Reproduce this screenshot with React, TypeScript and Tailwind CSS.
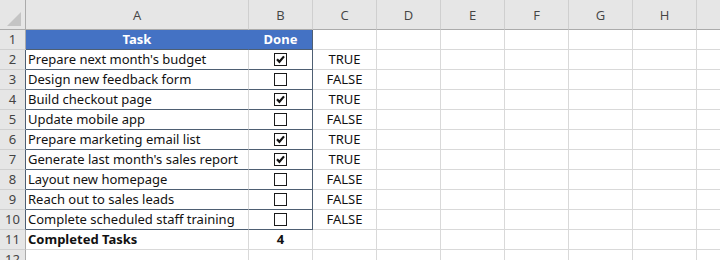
const cols = ['A', 'B', 'C', 'D', 'E', 'F', 'G', 'H', ''];
const widths = ['w-[223px]', 'w-[64px]', 'w-[64px]', 'w-[64px]', 'w-[64px]', 'w-[64px]', 'w-[64px]', 'w-[64px]', 'w-[64px]'];

const tasks: [string, boolean][] = [
  ["Prepare next month's budget", true],
  ['Design new feedback form', false],
  ['Build checkout page', true],
  ['Update mobile app', false],
  ['Prepare marketing email list', true],
  ["Generate last month's sales report", true],
  ['Layout new homepage', false],
  ['Reach out to sales leads', false],
  ['Complete scheduled staff training', false],
];

function Checkbox({ checked }: { checked: boolean }) {
  return (
    <svg width="13" height="13" viewBox="0 0 13 13" className="block">
      <rect x="0.5" y="0.5" width="12" height="12" fill="white" stroke="#1a1a1a" />
      {checked && <path d="M3 6.2 L5.4 8.8 L10 3.4" fill="none" stroke="#111" strokeWidth="2.2" />}
    </svg>
  );
}

function RowHead({ n, dark }: { n: number; dark?: boolean }) {
  return (
    <div
      className={`w-[26px] shrink-0 h-full flex items-center justify-center pt-[1px] bg-[#e6e6e6] text-[#444] text-[13px] border-b border-b-[#d0d0d0] border-r ${dark ? 'border-r-[#4e5f73]' : 'border-r-[#ababab]'}`}
    >
      {n}
    </div>
  );
}

function EmptyCells({ from }: { from: number }) {
  return (
    <>
      {cols.slice(from).map((c, i) => (
        <div key={from + i} className={`${widths[from + i]} shrink-0 h-full border-r border-b border-[#d9d9d9]`} />
      ))}
    </>
  );
}

export default function App() {
  return (
    <div className="w-[720px] h-[260px] overflow-hidden bg-white text-[#111]" style={{ fontFamily: '"Open Sans", "Noto Sans", sans-serif' }}>
      {/* column headers */}
      <div className="flex h-[30px]">
        <div className="w-[26px] shrink-0 h-full bg-[#e6e6e6] border-b border-r border-[#ababab] flex items-end justify-end pr-[4px] pb-[3px]">
          <svg width="14" height="14" viewBox="0 0 14 14">
            <polygon points="14,0 14,14 0,14" fill="#c4c4c4" />
          </svg>
        </div>
        {cols.map((c, i) => (
          <div
            key={i}
            className={`${widths[i]} shrink-0 h-full bg-[#e6e6e6] border-b border-b-[#ababab] border-r border-r-[#cfcfcf] flex items-center justify-center text-[13px] text-[#444] pt-[2px]`}
          >
            {c}
          </div>
        ))}
      </div>

      <div className="text-[13px]" style={{ fontFamily: '"Noto Sans", sans-serif' }}>
        {/* row 1 header */}
        <div className="flex h-[20px]">
          <RowHead n={1} />
          <div className="w-[223px] shrink-0 h-full bg-[#4472c4] text-white font-bold flex items-center justify-center pt-[1px] border-b border-b-[#4e5f73] border-r border-r-[#4472c4]">
            Task
          </div>
          <div className="w-[64px] shrink-0 h-full bg-[#4472c4] text-white font-bold flex items-center justify-center pt-[1px] border-b border-r border-[#4e5f73]">
            Done
          </div>
          <EmptyCells from={2} />
        </div>

        {tasks.map(([task, done], i) => (
          <div key={task} className="flex h-[20px]">
            <RowHead n={i + 2} dark />
            <div className="w-[223px] shrink-0 h-full flex items-center pl-[2px] pt-[1px] border-b border-b-[#4e5f73] border-r border-r-[#d9d9d9] whitespace-nowrap">
              {task}
            </div>
            <div className="w-[64px] shrink-0 h-full flex items-center justify-center border-b border-r border-[#4e5f73]">
              <Checkbox checked={done} />
            </div>
            <div className="w-[64px] shrink-0 h-full flex items-center justify-center pt-[1px] border-r border-b border-[#d9d9d9]">
              {done ? 'TRUE' : 'FALSE'}
            </div>
            <EmptyCells from={3} />
          </div>
        ))}

        {/* row 11 */}
        <div className="flex h-[20px]">
          <RowHead n={11} />
          <div className="w-[223px] shrink-0 h-full flex items-center pl-[2px] pt-[1px] font-bold border-r border-b border-[#d9d9d9]">
            Completed Tasks
          </div>
          <div className="w-[64px] shrink-0 h-full flex items-center justify-center pt-[1px] font-bold border-r border-b border-[#d9d9d9]">
            4
          </div>
          <EmptyCells from={2} />
        </div>

        <div className="flex h-[20px]">
          <RowHead n={12} />
          <EmptyCells from={0} />
        </div>
      </div>
    </div>
  );
}
